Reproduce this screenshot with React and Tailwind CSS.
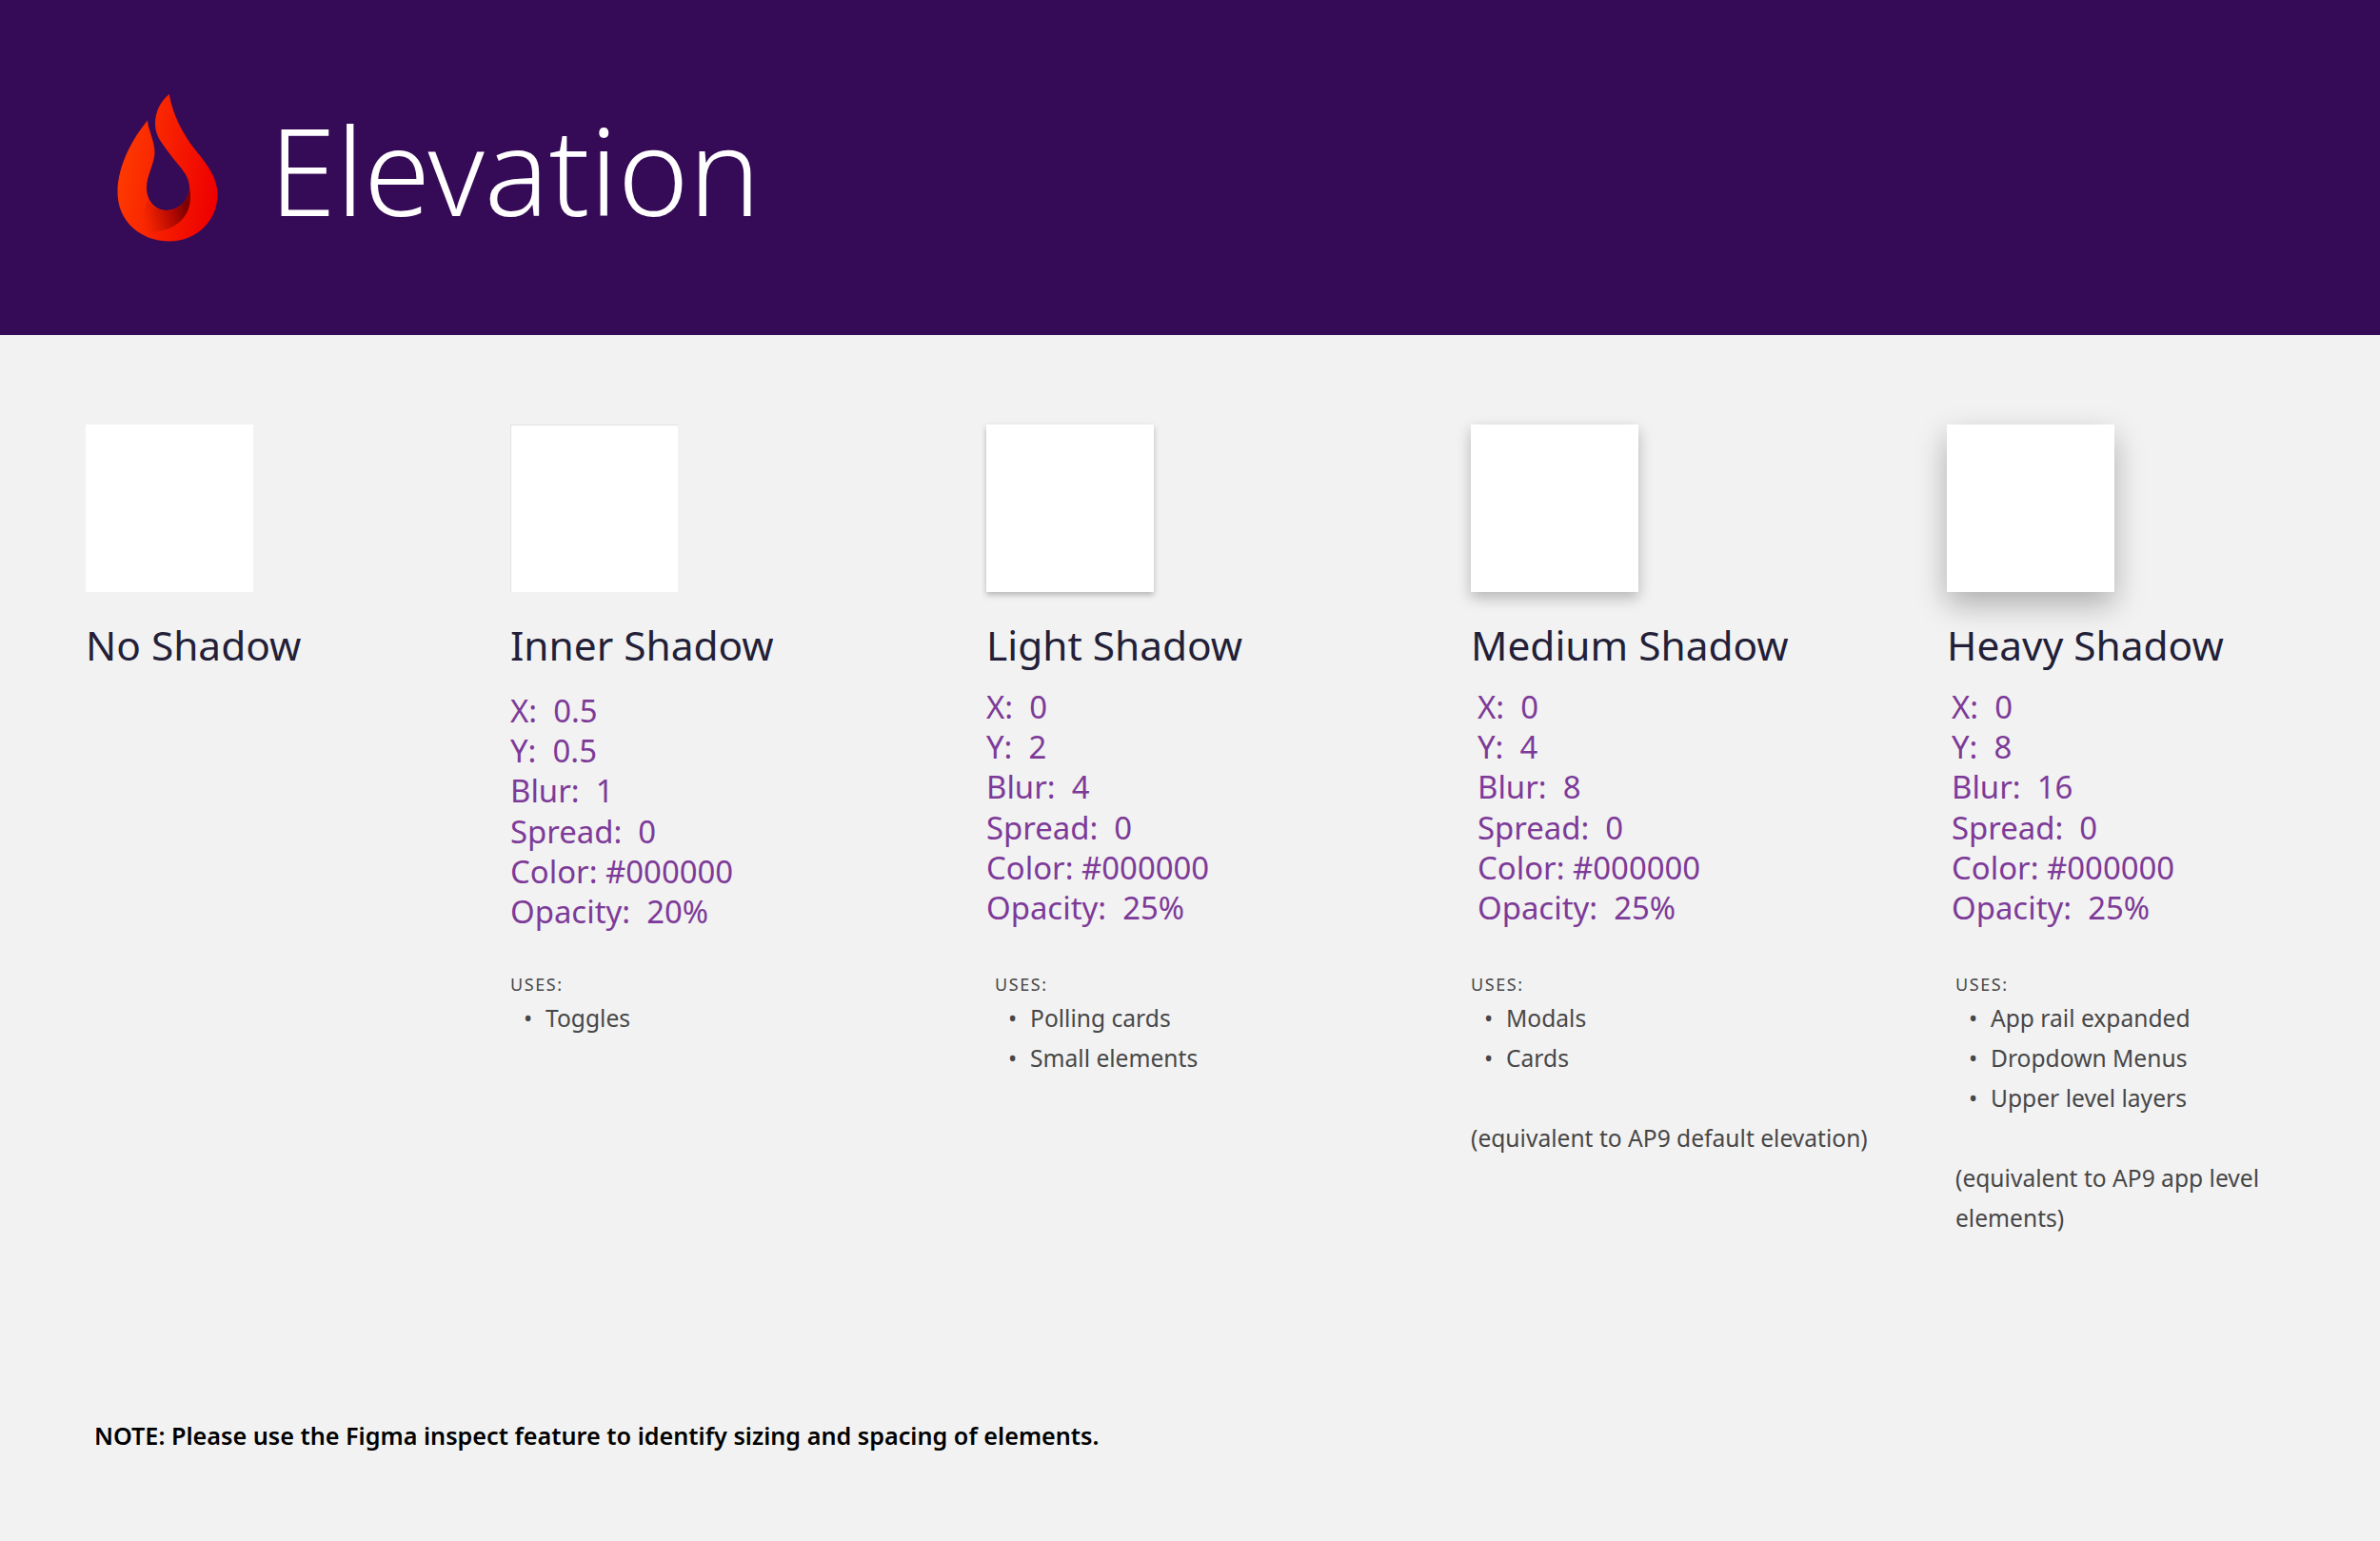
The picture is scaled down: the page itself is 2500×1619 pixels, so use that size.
const font = { fontFamily: '"Noto Sans", sans-serif' };

function Logo() {
  return (
    <svg viewBox="0 0 150 190" className="w-[150px] h-[190px] shrink-0 mt-[-2px]">
      <defs>
        <linearGradient id="flame" x1="0" y1="0.4" x2="1" y2="0.6">
          <stop offset="0" stopColor="#ff3c00" />
          <stop offset="1" stopColor="#ee0000" />
        </linearGradient>
        <linearGradient id="shade" x1="0.05" y1="0.6" x2="0.9" y2="0.4">
          <stop offset="0" stopColor="#e82400" stopOpacity="0" />
          <stop offset="0.35" stopColor="#d81800" />
          <stop offset="0.7" stopColor="#b00800" />
          <stop offset="1" stopColor="#800000" />
        </linearGradient>
      </defs>
      <path
        fill="url(#flame)"
        d="M77.7 19 C82 42 92 60 104 76 C117 92 128.5 106 128.5 124 C128.5 152 107 173 78 173.5 C47 173.5 23.5 152 23.5 122 C23.5 94 39 66 55 46.5 C55.5 56 62.5 68 62.5 80 C62.5 92 54 104 54 117 C54 131 63 141 75 141 C88 141 99 130 99 117 C99 103 87 94 77 80 C69 69 63 62 63 50 C63 37 69 26 77.7 19 Z"
      />
      <path
        fill="url(#shade)"
        d="M99 117 C99 130 88 141 75 141 C66 141 59 137 55 130 C52 140 48 152 45 163 C52 164 57 164 62 163.500 C86 162 100 146 100 128 C100 124 100 120 99 117 Z"
      />
    </svg>
  );
}

function Swatch({ shadow }) {
  return <div className={`w-[176px] h-[176px] bg-white ${shadow}`} />;
}

function Values({ rows, className }) {
  return (
    <div className={`text-[32.9px] leading-[42.2px] text-[#7d3a98] whitespace-pre ${className}`}>
      {rows.map((r) => (
        <div key={r}>{r}</div>
      ))}
    </div>
  );
}

function Uses({ items, className, note }) {
  return (
    <div className={`text-[24.6px] leading-[42px] text-[#474747] ${className}`}>
      <div className="text-[18px] leading-[42px] tracking-[1.6px] h-[36px]">USES:</div>
      <ul>
        {items.map((i) => (
          <li key={i} className="flex">
            <span className="w-[37px] pl-[14px] shrink-0">•</span>
            <span>{i}</span>
          </li>
        ))}
      </ul>
      {note && <p className="mt-[42px]">{note}</p>}
    </div>
  );
}

function Title({ children }) {
  return <h2 className="mt-[27px] text-[42.4px] leading-[58px] text-[#231f38] whitespace-nowrap">{children}</h2>;
}

export default function App() {
  return (
    <div style={font} className="w-[2500px] h-[1619px] bg-[#f2f2f2] flex flex-col">
      <header className="h-[352px] bg-[#350a56] flex items-center pl-[100px] shrink-0">
        <Logo />
        <h1 className="ml-[33px] mt-[4px] text-[126.4px] leading-none font-light text-white">Elevation</h1>
      </header>

      <main className="grid grid-cols-[446px_500px_509px_500px_1fr] pl-[90px] pt-[94px] h-[1140px]">
        <section>
          <Swatch shadow="" />
          <Title>No Shadow</Title>
        </section>

        <section>
          <Swatch shadow="shadow-[inset_1px_1px_1px_rgba(0,0,0,0.12)]" />
          <Title>Inner Shadow</Title>
          <Values className="mt-[19px]" rows={["X:  0.5", "Y:  0.5", "Blur:  1", "Spread:  0", "Color: #000000", "Opacity:  20%"]} />
          <Uses className="mt-[34px]" items={["Toggles"]} />
        </section>

        <section>
          <Swatch shadow="shadow-[0_3px_6px_rgba(0,0,0,0.25)]" />
          <Title>Light Shadow</Title>
          <Values className="mt-[15px]" rows={["X:  0", "Y:  2", "Blur:  4", "Spread:  0", "Color: #000000", "Opacity:  25%"]} />
          <Uses className="mt-[38px] ml-[9px]" items={["Polling cards", "Small elements"]} />
        </section>

        <section>
          <Swatch shadow="shadow-[0_6px_14px_rgba(0,0,0,0.25)]" />
          <Title>Medium Shadow</Title>
          <Values className="mt-[15px] ml-[7px]" rows={["X:  0", "Y:  4", "Blur:  8", "Spread:  0", "Color: #000000", "Opacity:  25%"]} />
          <Uses className="mt-[38px]" items={["Modals", "Cards"]} note="(equivalent to AP9 default elevation)" />
        </section>

        <section>
          <Swatch shadow="shadow-[0_13px_30px_rgba(0,0,0,0.28)]" />
          <Title>Heavy Shadow</Title>
          <Values className="mt-[15px] ml-[5px]" rows={["X:  0", "Y:  8", "Blur:  16", "Spread:  0", "Color: #000000", "Opacity:  25%"]} />
          <Uses className="mt-[38px] ml-[9px] w-[340px]" items={["App rail expanded", "Dropdown Menus", "Upper level layers"]} note="(equivalent to AP9 app level elements)" />
        </section>
      </main>

      <p className="pl-[99px] text-[25.2px] leading-[32px] font-semibold text-black">
        NOTE: Please use the Figma inspect feature to identify sizing and spacing of elements.
      </p>
    </div>
  );
}
